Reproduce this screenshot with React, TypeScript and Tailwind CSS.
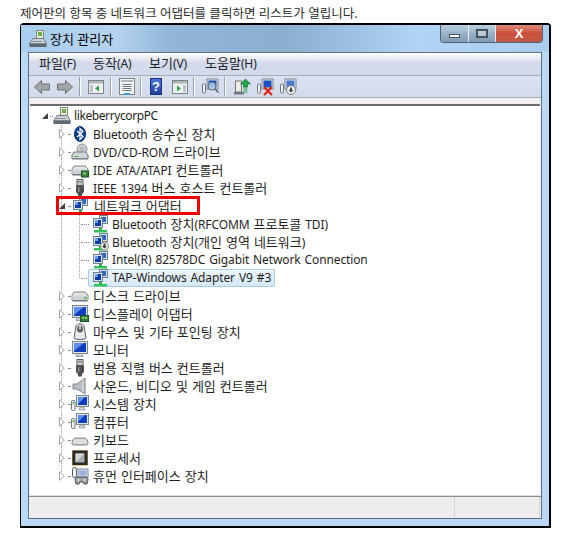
const FONT = "font-['Noto_Sans','Noto_Sans_CJK_KR',sans-serif]";

// 한글만 조금 크게 (원본 맑은 고딕 폭에 맞춤)
function T({ s }: { s: string }) {
  return (
    <>
      {s.split(/([가-힣]+)/).map((p, i) =>
        /[가-힣]/.test(p) ? (
          <span key={i} className="text-[13px]">{p}</span>
        ) : (
          <span key={i} className="tracking-[-0.12px] [word-spacing:1px]">{p}</span>
        )
      )}
    </>
  );
}

function Ic({ children, w = 18 }: { children: React.ReactNode; w?: number }) {
  return (
    <svg width={w} height="18" viewBox={`0 0 ${w} 18`} className="shrink-0">
      {children}
    </svg>
  );
}

function Screen({ x = 4, y = 1, w = 12, h = 10 }) {
  return (
    <>
      <rect x={x + 0.5} y={y + 0.5} width={w} height={h} fill="#dfe4e8" stroke="#7d8890" />
      <rect x={x + 2} y={y + 2} width={w - 3} height={h - 3} fill="#0f3fc0" />
      <path d={`M${x + 2} ${y + 2}h${w - 5}l-${w - 5} ${h - 4}z`} fill="#5c8fe8" />
    </>
  );
}

function Tower({ x = 0 }) {
  return (
    <>
      <rect x={x + 0.5} y="5.500" width="3.500" height="10" rx="1" fill="#f1f3f3" stroke="#71787c" />
      <rect x={x + 1.5} y="7" width="1.500" height="2" fill="#66b24c" />
    </>
  );
}

const PcGlyph = () => (
  <>
    <rect x="7.500" y=".5" width="7" height="9" fill="#e8ecd8" stroke="#7c8a80" />
    <rect x="9" y="2" width="4" height="4" fill="#6bb04f" />
    <path d="M4 8.500h10.500l3 5.500H.5z" fill="#cfd4d8" stroke="#707a80" />
    <rect x=".5" y="13.500" width="17" height="3.500" fill="#5e6870" />
    <rect x="3" y="11" width="10" height="1" fill="#848d94" />
  </>
);

const ComputerRoot = () => <Ic><PcGlyph /></Ic>;

const BluetoothIc = () => (
  <Ic>
    <ellipse cx="9" cy="9" rx="5.500" ry="7.500" fill="#0b3f8f" stroke="#0a2b66" />
    <path d="M6 6l6 5.500-3 3V3.500l3 3-6 5.500" fill="none" stroke="#fff" strokeWidth="1.200" />
  </Ic>
);

const DvdIc = () => (
  <Ic>
    <circle cx="11" cy="6" r="5" fill="#c9ced2" stroke="#8a9296" />
    <circle cx="11" cy="6" r="1.400" fill="#fff" stroke="#8a9296" />
    <path d="M3 9h12l2 3v4H1v-4z" fill="#d3d7da" stroke="#70787d" />
    <rect x="3" y="13" width="5" height="1" fill="#62b046" />
    <rect x="1.500" y="15" width="15" height="1" fill="#7d858a" />
  </Ic>
);

const DiskIc = ({ chip = false }: { chip?: boolean }) => (
  <Ic>
    <path d="M3 5h11l3 3v5H1V8z" fill="#e2e5e7" stroke="#80888c" />
    <rect x="1.500" y="8.500" width="15" height="5" rx="1" fill="#d0d4d6" />
    <rect x="13" y="10" width="3" height="2" fill="#6dba4e" />
    <rect x="1.500" y="13" width="15" height="1.500" fill="#6f777b" />
    {chip && <rect x="10.500" y="10" width="7" height="6" fill="#2f7d3b" stroke="#1e4f27" />}
    {chip && <rect x="12" y="11.500" width="3" height="2" fill="#97cf6c" />}
  </Ic>
);

const PlugIc = () => (
  <Ic>
    <rect x="6" y=".5" width="6" height="6" fill="#c7cbce" stroke="#5a5f63" />
    <rect x="7.500" y="2" width="1" height="1.500" fill="#3f4447" />
    <rect x="9.500" y="2" width="1" height="1.500" fill="#3f4447" />
    <path d="M5 6.500h8V13l-2 2v2.500H7V15l-2-2z" fill="#4a4f53" />
    <rect x="7" y="8" width="1.500" height="5" fill="#888e92" />
  </Ic>
);

const NetIc = ({ down = false }: { down?: boolean }) => (
  <Ic>
    <rect x="8.500" y=".5" width="8" height="8" fill="#dde3ea" stroke="#6f8093" />
    <rect x="10" y="2" width="5" height="5" fill="#2b66c8" />
    <rect x="2.500" y="3.500" width="9" height="9" fill="#dde3ea" stroke="#6f8093" />
    <rect x="4" y="5" width="6" height="6" fill="#0e3aa5" />
    <rect x="4" y="5" width="3" height="3" fill="#6b9cf0" />
    <rect x="8" y="12.500" width="3" height="3" fill="#2fb04a" />
    <rect x="3" y="15" width="13" height="2.500" fill="#36c05a" />
    {down && <circle cx="13.500" cy="13" r="4" fill="#f2f2f2" stroke="#8b8b8b" />}
    {down && <path d="M12.500 10.500h2V13H16l-2.500 2.500L11 13h1.500z" fill="#3b3b3b" />}
  </Ic>
);

const DisplayIc = ({ card = false }: { card?: boolean }) => (
  <Ic>
    <Screen x={1} y={0} w={15} h={12} />
    <path d="M6 12.500h5l1 3H5z" fill="#c8ced3" stroke="#808a90" strokeWidth=".7" />
    {card && <rect x="9.500" y="10.500" width="8" height="6" fill="#2d7d3c" stroke="#1e5529" />}
    {card && <rect x="11" y="12" width="2" height="2" fill="#9bd070" />}
    {card && <rect x="14" y="12" width="2" height="2" fill="#9bd070" />}
  </Ic>
);

const MouseIc = () => (
  <Ic>
    <path d="M5 3c1-3 7-3 8 0l2 12c-1 2-11 2-12 0z" fill="#e8eaec" stroke="#5b6064" />
    <ellipse cx="9" cy="6" rx="3" ry="3.500" fill="#5a6065" />
    <rect x="8.300" y="3" width="1.400" height="3.500" fill="#eef0f0" />
  </Ic>
);

const SpeakerIc = () => (
  <Ic>
    <path d="M2 7h4l8-6v16l-8-5H2z" fill="#b9bec2" stroke="#7d8488" />
    <path d="M12 2.500v13" stroke="#e4e7e9" />
  </Ic>
);

const SystemIc = () => (
  <Ic>
    <Tower x={0} />
    <Screen x={5} y={0} w={12} h={11} />
    <path d="M9 12h4l1 3H8z" fill="#cdd2d6" stroke="#868f94" strokeWidth=".7" />
  </Ic>
);

const KeyboardIc = () => (
  <Ic>
    <path d="M1 12c0-3 2-5 4-5h8c2 0 4 2 4 5 0 2-1 2-2 2H3c-1 0-2 0-2-2z" fill="#d2d6d9" stroke="#7e8488" />
    <path d="M3.500 9.500h11M2.500 11.500h13" stroke="#f6f7f7" strokeDasharray="1 1" />
  </Ic>
);

const CpuIc = () => (
  <Ic>
    <rect x="1" y="1.500" width="16" height="15" fill="#c49a30" />
    <rect x="1.500" y="1.500" width="15" height="14.500" fill="#2b2b2b" />
    <rect x="4.500" y="4.500" width="9" height="9" fill="#a9acaf" />
    <path d="M4.500 4.500h9l-9 9z" fill="#d4d6d8" />
  </Ic>
);

const HidIc = () => (
  <Ic>
    <rect x="1.500" y=".5" width="4" height="10" rx="2" fill="#eef0f1" stroke="#54595c" />
    <rect x="6" y="2" width="11" height="8" fill="#dfe6ee" stroke="#7d8890" />
    <rect x="7.500" y="3.500" width="8" height="5" fill="#97b0de" />
    <path d="M4 12c0-2 2-2 5-2h4c3 0 4 0 4 3l-1 4h-3l-1-2H9l-1 2H5z" fill="#9aa1a6" stroke="#4e5356" />
    <circle cx="7.500" cy="13" r="1" fill="#e7e9ea" />
    <circle cx="13.500" cy="13" r="1" fill="#e7e9ea" />
  </Ic>
);

function Open() {
  return <span className="block w-0 h-0 border-l-[6px] border-b-[6px] border-l-transparent border-b-[#3f3f3f]" />;
}

function Closed() {
  return (
    <svg width="6" height="10" viewBox="0 0 6 10" className="shrink-0">
      <path d="M.5.700L5.300 5 .5 9.300z" fill="#fff" stroke="#a6a6a6" />
    </svg>
  );
}

const ROWS_A = [
  { icon: <BluetoothIc />, label: "Bluetooth 송수신 장치" },
  { icon: <DvdIc />, label: "DVD/CD-ROM 드라이브" },
  { icon: <DiskIc chip />, label: "IDE ATA/ATAPI 컨트롤러" },
  { icon: <PlugIc />, label: "IEEE 1394 버스 호스트 컨트롤러" },
];

const ROWS_NET = [
  { icon: <NetIc />, label: "Bluetooth 장치(RFCOMM 프로토콜 TDI)" },
  { icon: <NetIc down />, label: "Bluetooth 장치(개인 영역 네트워크)" },
  { icon: <NetIc />, label: "Intel(R) 82578DC Gigabit Network Connection" },
  { icon: <NetIc />, label: "TAP-Windows Adapter V9 #3", selected: true },
];

const ROWS_B = [
  { icon: <DiskIc />, label: "디스크 드라이브" },
  { icon: <DisplayIc card />, label: "디스플레이 어댑터" },
  { icon: <MouseIc />, label: "마우스 및 기타 포인팅 장치" },
  { icon: <DisplayIc />, label: "모니터" },
  { icon: <PlugIc />, label: "범용 직렬 버스 컨트롤러" },
  { icon: <SpeakerIc />, label: "사운드, 비디오 및 게임 컨트롤러" },
  { icon: <SystemIc />, label: "시스템 장치" },
  { icon: <SystemIc />, label: "컴퓨터" },
  { icon: <KeyboardIc />, label: "키보드" },
  { icon: <CpuIc />, label: "프로세서" },
  { icon: <HidIc />, label: "휴먼 인터페이스 장치" },
];

function Branch({ icon, label }: { icon: React.ReactNode; label: string }) {
  return (
    <div className="flex h-[18px] items-center">
      <span className="w-[6px] flex justify-center"><Closed /></span>
      <span className="ml-[3px] w-[2px] border-t border-dotted border-[#8a8a8a]" />
      <span className="ml-[1px]">{icon}</span>
      <span className="ml-[4px] whitespace-nowrap"><T s={label} /></span>
    </div>
  );
}

function Sep() {
  return <span className="block w-px h-[19px] bg-[#9aa0a8] border-r border-white box-content" />;
}

function Toolbar() {
  const arrow = "M7.500 1.500L.5 8l7 6.500V11h8V5h-8z";
  return (
    <div className="h-[22px] flex items-center pl-[5px] bg-gradient-to-b from-[#dbe1f0] to-[#d3daea] border-b border-[#a9adb5]">
      <svg width="16" height="16" viewBox="0 0 16 16"><path d={arrow} fill="#a3a5a7" stroke="#6e7378" /></svg>
      <svg width="16" height="16" viewBox="0 0 16 16" className="ml-[7px] -scale-x-100"><path d={arrow} fill="#a3a5a7" stroke="#6e7378" /></svg>
      <span className="ml-[6px]"><Sep /></span>
      <svg width="16" height="16" viewBox="0 0 16 16" className="ml-[7px]">
        <rect x=".5" y="1.500" width="15" height="13" fill="#eef0f2" stroke="#7b8389" />
        <rect x="1" y="2" width="14" height="2.500" fill="#aeb5bb" />
        <rect x="2" y="6" width="3" height="7" fill="#bcc2c6" />
        <path d="M11 6.500v6L7 9.500z" fill="#2fa54a" />
      </svg>
      <span className="ml-[6px]"><Sep /></span>
      <svg width="16" height="18" viewBox="0 0 16 18" className="ml-[7px]">
        <rect x=".5" y=".5" width="15" height="16" fill="#f4f5f6" stroke="#7b8389" />
        <rect x="2" y="2" width="12" height="2" fill="#aeb5bb" />
        <path d="M3.500 6.500h9M3.500 8.500h9M3.500 10.500h9M3.500 12.500h9" stroke="#70787e" />
        <rect x="5" y="15" width="6" height="2" fill="#38a0e8" />
      </svg>
      <span className="ml-[5px]"><Sep /></span>
      <span className="ml-[8px] w-[12px] h-[17px] bg-gradient-to-b from-[#4a78d8] to-[#243f9e] border border-[#1c2f80] text-white text-[13px] leading-[15px] text-center font-bold font-['Liberation_Sans',sans-serif]">?</span>
      <svg width="16" height="16" viewBox="0 0 16 16" className="ml-[10px]">
        <rect x=".5" y="1.500" width="15" height="13" fill="#eef0f2" stroke="#7b8389" />
        <rect x="1" y="2" width="14" height="2.500" fill="#aeb5bb" />
        <rect x="11" y="6" width="3" height="7" fill="#bcc2c6" />
        <path d="M5 6.500v6L9 9.500z" fill="#2fa54a" />
      </svg>
      <span className="ml-[5px]"><Sep /></span>
      <svg width="17" height="18" viewBox="0 0 17 18" className="ml-[7px]">
        <rect x="0.500" y="6" width="3" height="9" rx="1" fill="#eef0f1" stroke="#6e767b" />
        <rect x="5" y="1" width="11" height="10" fill="#dfe4e8" stroke="#7d8890" />
        <rect x="6.500" y="2.500" width="8" height="7" fill="#1d4fc0" />
        <circle cx="10" cy="8" r="4" fill="#b9d4ee" fillOpacity=".8" stroke="#5c6d7c" />
        <path d="M13 11l3.500 3.500" stroke="#55606a" strokeWidth="1.500" />
      </svg>
      <span className="ml-[5px]"><Sep /></span>
      <svg width="19" height="18" viewBox="0 0 19 18" className="ml-[7px]">
        <rect x="2.500" y="3" width="6" height="11" fill="#f0ede0" stroke="#6e767b" />
        <rect x="1" y="14" width="10" height="2.500" fill="#71787d" />
        <path d="M12.500 1l5 5h-3v3h-4V6h-3z" fill="#1fa647" stroke="#147a33" strokeWidth=".7" />
        <path d="M10.500 10h4M10.500 12h4M10.500 14h4" stroke="#1fa647" strokeWidth="1.200" />
      </svg>
      <svg width="17" height="18" viewBox="0 0 17 18" className="ml-[5px]">
        <rect x="0.500" y="6" width="3" height="9" rx="1" fill="#eef0f1" stroke="#6e767b" />
        <rect x="5" y="1" width="11" height="10" fill="#dfe4e8" stroke="#7d8890" />
        <rect x="6.500" y="2.500" width="8" height="7" fill="#1d4fc0" />
        <path d="M7 9l8 8M15 9l-8 8" stroke="#e0241c" strokeWidth="2.200" />
      </svg>
      <svg width="17" height="18" viewBox="0 0 17 18" className="ml-[6px]">
        <rect x="0.500" y="6" width="3" height="9" rx="1" fill="#eef0f1" stroke="#6e767b" />
        <rect x="5" y="1" width="11" height="10" fill="#dfe4e8" stroke="#7d8890" />
        <rect x="6.500" y="2.500" width="8" height="7" fill="#4a7ad0" />
        <circle cx="11" cy="12" r="4.500" fill="#eef0f0" stroke="#7c7c7c" />
        <path d="M10 9.500h2V12h1.500L11 14.500 8.500 12H10z" fill="#444" />
      </svg>
    </div>
  );
}

export default function App() {
  return (
    <div className={`${FONT} relative w-[571px] h-[539px] bg-white text-[12px] leading-[18px] text-[#2b2b2b] overflow-hidden`}>
      <div className="h-[23px] pl-[20px] pt-[5px] leading-[18px] whitespace-nowrap">
        <span className="text-[12.500px] tracking-[0.03px]">제어판의 항목 중 네트워크 어댑터를 클릭하면 리스트가 열립니다.</span>
      </div>

      {/* 창 */}
      <div className="ml-[20px] w-[531px] h-[505px] border-t-2 border-l border-r-2 border-b-2 border-black rounded-t-[4px] flex flex-col bg-[#b9d9f6]">
        <div className="h-[27px] flex items-start justify-between bg-[linear-gradient(90deg,#a9cdee_0%,#b5d3ef_18%,#92b6d8_28%,#8cafd0_50%,#9cc0e2_62%,#b3d4f4_75%,#aacdee_100%)]">
          <div className="flex items-center h-[26px] pl-[8px] pt-[1px]">
            <Ic><PcGlyph /></Ic>
            <span className="ml-[3px] text-black text-[13px]">장치 관리자</span>
          </div>
          <div className="mr-[6px] flex h-[18px] rounded-b-[4px] border border-t-0 border-[#4f6378] overflow-hidden">
            <span className="w-[28px] flex items-end justify-center pb-[4px] bg-gradient-to-b from-[#b9cfe2] to-[#7f99b1] border-r border-[#e4edf5]">
              <span className="w-[11px] h-[4px] bg-white border border-[#46535f]" />
            </span>
            <span className="w-[27px] flex items-center justify-center bg-gradient-to-b from-[#b9cfe2] to-[#7f99b1] border-r border-[#e4edf5]">
              <span className="w-[12px] h-[9px] border-2 border-[#46535f] bg-white/30" />
            </span>
            <span className="w-[46px] flex items-center justify-center bg-gradient-to-b from-[#d98a78] via-[#c9503a] to-[#c05a4a] text-white text-[13px] font-bold leading-none font-['Liberation_Sans',sans-serif]">
              X
            </span>
          </div>
        </div>

        <div className="mx-[7px] mb-[7px] flex-1 border border-[#5e7085] bg-[#f0f0f0] flex flex-col min-h-0">
          {/* 메뉴 */}
          <div className="h-[23px] flex items-center gap-[16px] pl-[10px] pb-[1px] bg-gradient-to-b from-white from-0% to-[#d3daeb] to-45% border-b border-[#a9adb5] text-[#222] whitespace-nowrap">
            <span className="w-[38px]"><T s="파일(F)" /></span>
            <span className="w-[40px]"><T s="동작(A)" /></span>
            <span className="w-[40px]"><T s="보기(V)" /></span>
            <span className="w-[53px]"><T s="도움말(H)" /></span>
          </div>
          <Toolbar />

          {/* 트리 */}
          <div className="mt-[6px] flex-1 min-h-0 mx-px bg-white border-t-2 border-t-[#6d6d6d] border-b border-b-[#dcdcdc] pt-[1px] pl-[12px] overflow-hidden text-[#1f1f1f]">
            <div className="flex h-[18px] items-center">
              <Open />
              <span className="ml-[2px] w-[3px] border-t border-dotted border-[#8a8a8a]" />
              <ComputerRoot />
              <span className="ml-[3px] tracking-[-0.4px]">likeberrycorpPC</span>
            </div>

            <div className="ml-[19px] border-l border-dotted border-[#9a9a9a] -mt-[2px] pt-[2px] h-[353px]">
              <div className="-ml-[3px]">
                {ROWS_A.map((r) => <Branch key={r.label} {...r} />)}

                <div className="flex h-[18px] items-center">
                  <span className="w-[6px]"><Open /></span>
                  <span className="ml-[3px] w-[2px] border-t border-dotted border-[#8a8a8a]" />
                  <span className="ml-[1px]"><NetIc /></span>
                  <span className="ml-[5px] whitespace-nowrap"><T s="네트워크 어댑터" /></span>
                </div>

                <div className="ml-[20px] mb-[9px] border-l border-dotted border-[#9a9a9a] h-[63px]">
                  {ROWS_NET.map((r) => (
                    <div key={r.label} className="flex h-[18px] items-center">
                      <span className="ml-px w-[8px] border-t border-dotted border-[#8a8a8a]" />
                      <span
                        className={
                          r.selected
                            ? "flex h-[18px] items-center pl-[2px] pr-[3px] -ml-[1px] border border-[#a8cbe6] rounded-[2px] bg-gradient-to-b from-[#eef6fc] to-[#d5e8f7]"
                            : "flex h-[18px] items-center pl-[3px] -ml-[1px]"
                        }
                      >
                        {r.icon}
                        <span className="ml-[3px] whitespace-nowrap"><T s={r.label} /></span>
                      </span>
                    </div>
                  ))}
                </div>

                {ROWS_B.map((r) => <Branch key={r.label} {...r} />)}
              </div>
            </div>
          </div>

          {/* 상태 표시줄 */}
          <div className="h-[22px] border-t border-[#8f8f8f] bg-[#f0eeed] flex">
            <span className="w-[426px] border-r border-[#d6d6d6]" />
            <span className="flex-1 mr-[1px] border-r border-[#d6d6d6]" />
          </div>
        </div>
      </div>

      {/* 강조 박스 */}
      <div className="absolute left-[56px] top-[196px] w-[144px] h-[19px] border-[3px] border-[#ee0000]" />
    </div>
  );
}
